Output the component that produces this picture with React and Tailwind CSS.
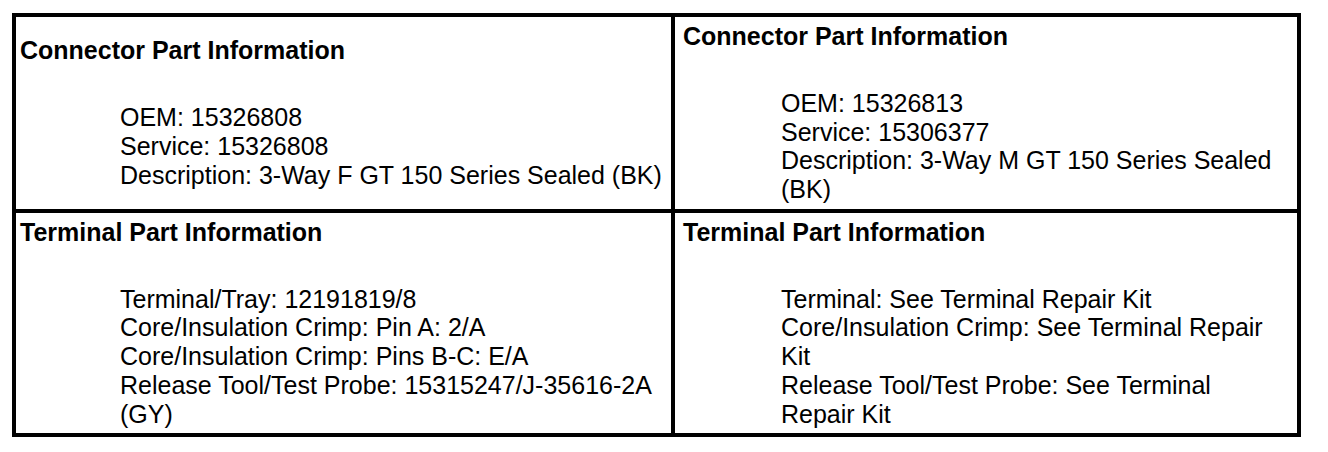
import React from 'react';

const cells = [
  {
    title: 'Connector Part Information',
    lines: ['OEM: 15326808', 'Service: 15326808', 'Description: 3-Way F GT 150 Series Sealed (BK)'],
    pad: 'pl-1 pr-0',
    indent: 'ml-[100px]',
  },
  {
    title: 'Connector Part Information',
    lines: ['OEM: 15326813', 'Service: 15306377', 'Description: 3-Way M GT 150 Series Sealed (BK)'],
    pad: 'pl-2 pr-4',
    indent: 'ml-[98px]',
  },
  {
    title: 'Terminal Part Information',
    lines: [
      'Terminal/Tray: 12191819/8',
      'Core/Insulation Crimp: Pin A: 2/A',
      'Core/Insulation Crimp: Pins B-C: E/A',
      'Release Tool/Test Probe: 15315247/J-35616-2A (GY)',
    ],
    pad: 'pl-1 pr-0',
    indent: 'ml-[100px]',
  },
  {
    title: 'Terminal Part Information',
    lines: [
      'Terminal: See Terminal Repair Kit',
      'Core/Insulation Crimp: See Terminal Repair Kit',
      'Release Tool/Test Probe: See Terminal Repair Kit',
    ],
    pad: 'pl-2 pr-4',
    indent: 'ml-[98px]',
  },
];

const Cell = ({ title, lines, pad, indent }) => (
  <div className={`bg-white flex flex-col justify-center py-[5px] ${pad}`}>
    <h3 className="font-bold mb-[38px]">{title}</h3>
    <div className={indent}>
      {lines.map((line) => (
        <p key={line}>{line}</p>
      ))}
    </div>
  </div>
);

export default function App() {
  return (
    <div
      className="min-h-[452px] bg-white pl-[12px] pt-[13px] text-black text-[25px] leading-[1.15]"
      style={{ fontFamily: '"Liberation Sans", Arial, sans-serif' }}
    >
      <div className="w-[1289px] border-4 border-black bg-black grid grid-cols-[655px_622px] gap-1">
        {cells.map((cell, i) => (
          <Cell key={i} {...cell} />
        ))}
      </div>
    </div>
  );
}
